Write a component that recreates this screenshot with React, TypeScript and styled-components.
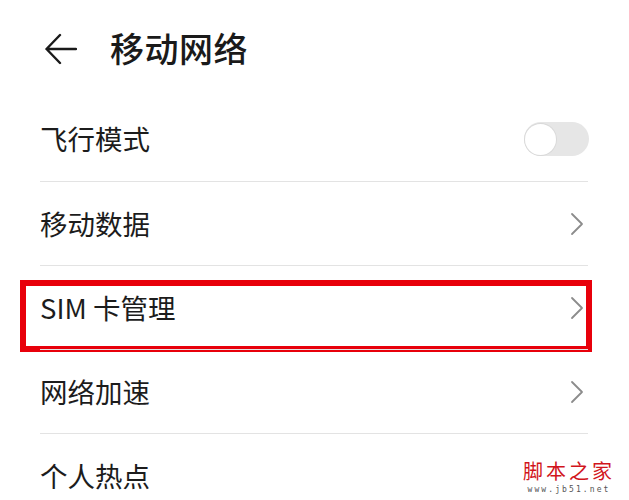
import React from "react";
import styled, { createGlobalStyle } from "styled-components";

const Global = createGlobalStyle`
  html, body { margin: 0; padding: 0; background: #ffffff; }
  body { font-family: "Noto Sans CJK SC", "Noto Sans", sans-serif; color: #1b1b1b; }
`;

const Page = styled.div`
  position: relative;
  width: 629px;
  height: 500px;
  overflow: hidden;
  background: #fff;
`;

const Header = styled.header`
  height: 95px;
  display: flex;
  align-items: center;
  padding-left: 44px;
  box-sizing: border-box;
`;

const BackButton = styled.div`
  width: 33px;
  height: 32px;
  display: flex;
  align-items: center;
  justify-content: center;
  margin-top: 2px;
`;

const Title = styled.h1`
  margin: 0 0 0 33px;
  font-size: 34px;
  font-weight: 500;
  letter-spacing: 0.5px;
  color: #1a1a1a;
  line-height: 1;
`;

const List = styled.div`
  margin: 2px 41px 0 40px;
`;

const Row = styled.div<{ $first?: boolean }>`
  position: relative;
  height: 84px;
  display: flex;
  align-items: center;
  justify-content: space-between;
  border-top: ${(p) => (p.$first ? "none" : "1px solid #e3e3e3")};
  box-sizing: border-box;
`;

const Label = styled.span`
  font-size: 27.5px;
  font-weight: 400;
  color: #1c1c1c;
  line-height: 1;
`;

const Track = styled.div`
  width: 65px;
  height: 34px;
  border-radius: 17px;
  background: #e6e6e6;
  display: flex;
  align-items: center;
  padding: 0 1px;
  box-sizing: border-box;
  margin-right: -1px;
`;

const Knob = styled.div`
  width: 31px;
  height: 31px;
  border-radius: 50%;
  background: #fff;
  box-shadow: 0 0 0 1px #d9d9d9;
`;

const Chevron = styled.svg`
  width: 14px;
  height: 24px;
  margin-right: 4px;
`;

const Highlight = styled.div`
  position: absolute;
  left: -20px;
  right: -4px;
  top: 14px;
  height: 72px;
  border: 6px solid #e8000b;
  box-sizing: border-box;
  pointer-events: none;
`;

const Watermark = styled.div`
  position: absolute;
  right: 14px;
  bottom: 5px;
  display: flex;
  flex-direction: column;
  align-items: center;
`;

const WmTitle = styled.div`
  font-family: "Noto Sans CJK SC", serif;
  font-size: 20px;
  color: #d1141b;
  letter-spacing: 3px;
  line-height: 29px;
`;

const WmUrl = styled.div`
  font-family: "DejaVu Sans Mono", monospace;
  font-size: 8px;
  color: #555;
  letter-spacing: 2.1px;
  line-height: 10px;
`;

const ChevronIcon = () => (
  <Chevron viewBox="0 0 14 24">
    <path d="M2 2 L12 12 L2 22" fill="none" stroke="#8c8c8c" strokeWidth="1.8" strokeLinecap="round" strokeLinejoin="round" />
  </Chevron>
);

export default function App() {
  return (
    <Page>
      <Global />
      <Header>
        <BackButton>
          <svg width="32" height="32" viewBox="0 0 32 32">
            <path d="M15 2 L1.5 16 L15 30 M1.5 16 L31 16" fill="none" stroke="#1a1a1a" strokeWidth="2.4" strokeLinecap="round" strokeLinejoin="round" />
          </svg>
        </BackButton>
        <Title>移动网络</Title>
      </Header>
      <List>
        <Row $first>
          <Label>飞行模式</Label>
          <Track>
            <Knob />
          </Track>
        </Row>
        <Row>
          <Label>移动数据</Label>
          <ChevronIcon />
        </Row>
        <Row>
          <Label>SIM 卡管理</Label>
          <ChevronIcon />
          <Highlight />
        </Row>
        <Row>
          <Label>网络加速</Label>
          <ChevronIcon />
        </Row>
        <Row>
          <Label>个人热点</Label>
        </Row>
      </List>
      <Watermark>
        <WmTitle>脚本之家</WmTitle>
        <WmUrl>www.jb51.net</WmUrl>
      </Watermark>
    </Page>
  );
}
